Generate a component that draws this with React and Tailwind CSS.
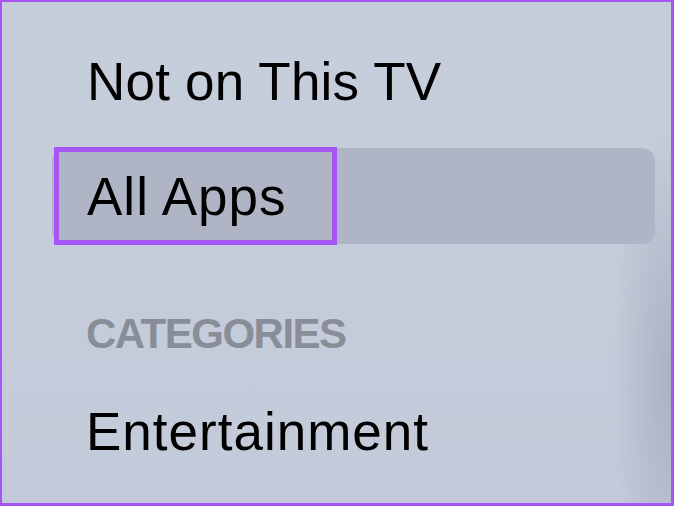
export default function App() {
  return (
    <div
      className="w-[674px] h-[506px] overflow-hidden border-[3px] border-t-2 border-l-2 border-[#a855f7] bg-[#c5ccdb] bg-[radial-gradient(ellipse_60px_260px_at_100%_75%,rgba(70,76,96,0.2)_0%,rgba(70,76,96,0)_100%),linear-gradient(180deg,#c6cddb_0%,#c3cad9_100%)]"
      style={{ fontFamily: '"Liberation Sans", Arial, sans-serif' }}
    >
      <div className="flex flex-col pt-[53px]">
        {/* Not on this TV */}
        <div className="pl-[85px] h-[53px] text-[53px] leading-[53px] text-black tracking-[0.2px]">
          Not on This TV
        </div>

        {/* Focused row */}
        <div className="mt-[40px] ml-[50px] w-[603px] h-[96px] rounded-[13px] bg-[#afb5c5] flex">
          <div className="w-[283px] h-[98px] -mt-px ml-[2px] border-[5px] border-[#a855f7] flex items-center pl-[28px]">
            <span className="text-[53px] leading-[53px] text-black tracking-[1px]">
              All Apps
            </span>
          </div>
        </div>

        {/* Section header */}
        <div className="mt-[69px] pl-[84px] h-[42px] text-[42px] leading-[42px] font-bold text-[#898d98] tracking-[-1.5px]">
          CATEGORIES
        </div>

        <div className="mt-[50px] pl-[84px] h-[53px] text-[53px] leading-[53px] text-black tracking-[1px]">
          Entertainment
        </div>
      </div>
    </div>
  );
}
